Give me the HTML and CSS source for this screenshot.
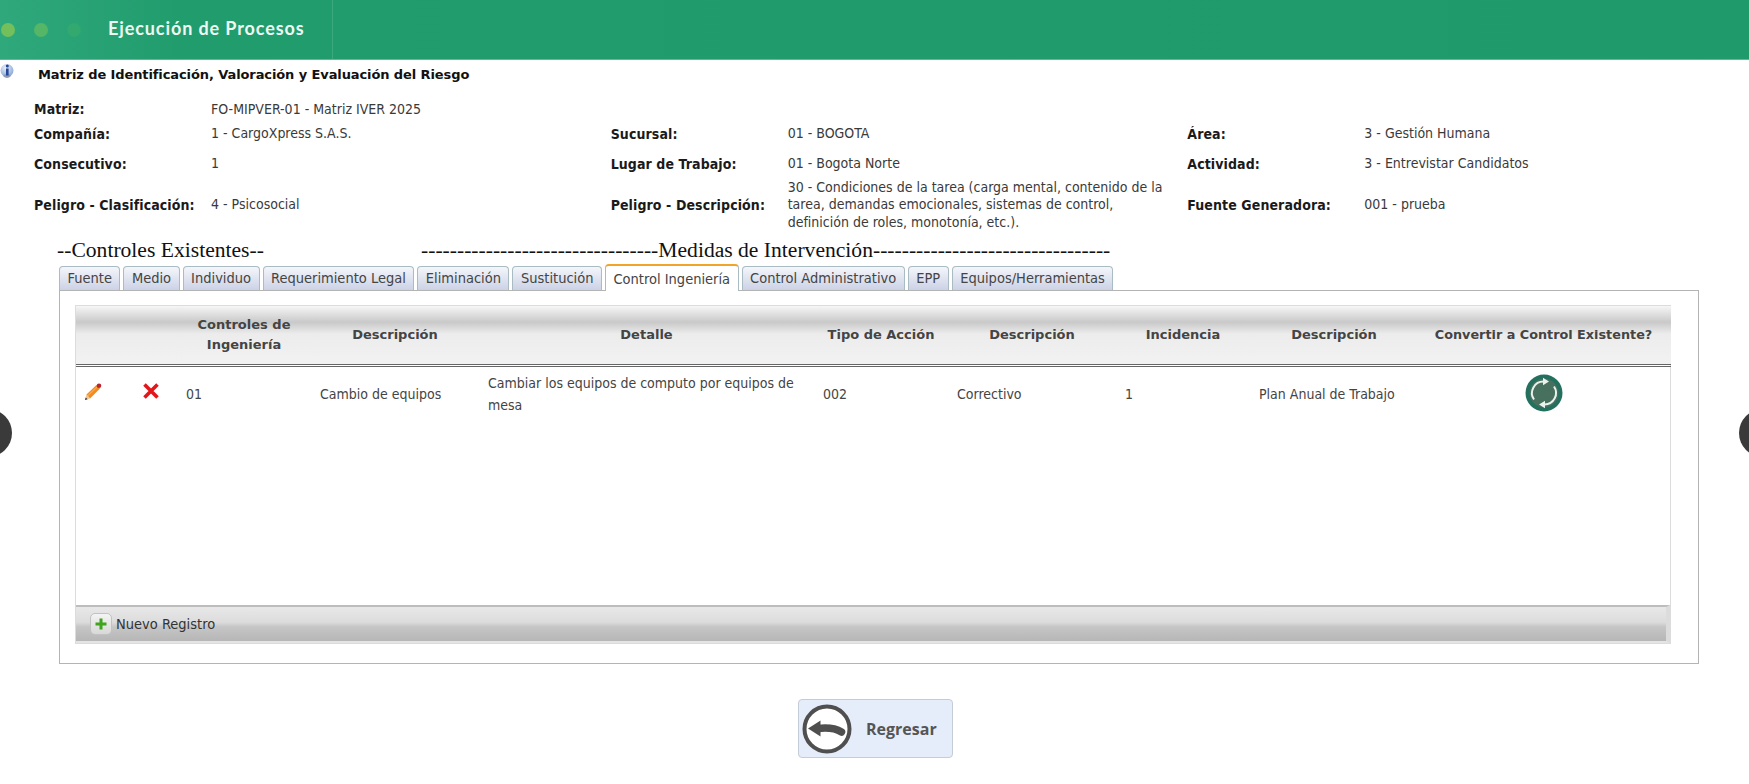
FILE: index.html
```html
<!DOCTYPE html>
<html lang="es">
<head>
<meta charset="utf-8">
<title>Ejecución de Procesos</title>
<link rel="stylesheet" href="styles.css">
</head>
<body>
<header class="topbar">
  <div class="brand">
    <span class="dot dot-a"></span><span class="dot dot-b"></span><span class="dot dot-c"></span>
    <span class="brand-title">Ejecución de Procesos</span>
  </div>
</header>
<div class="title-row">
  <svg class="info-icon" width="15" height="17" viewBox="0 0 15 17"><defs><radialGradient id="sph" cx="0.4" cy="0.3" r="0.8"><stop offset="0" stop-color="#e8eff9"/><stop offset="1" stop-color="#7f9fd0"/></radialGradient></defs><circle cx="7" cy="7.5" r="6.5" fill="url(#sph)"/><path d="M3 13q4 4 8 0l-1-1.500H4z" fill="#8f9db3"/><rect x="6" y="5.500" width="2.600" height="7" fill="#23479a"/><circle cx="7.300" cy="3" r="1.500" fill="#23479a"/></svg>
  <h1 class="page-title">Matriz de Identificación, Valoración y Evaluación del Riesgo</h1>
</div>
<table class="info">
  <colgroup><col class="c-l"><col class="c-v"><col class="c-l"><col class="c-v"><col class="c-l"><col class="c-v"></colgroup>
  <tr class="r1"><th>Matriz:</th><td colspan="5">FO-MIPVER-01 - Matriz IVER 2025</td></tr>
  <tr class="r2"><th>Compañía:</th><td>1 - CargoXpress S.A.S.</td><th>Sucursal:</th><td>01 - BOGOTA</td><th>Área:</th><td>3 - Gestión Humana</td></tr>
  <tr class="r3"><th>Consecutivo:</th><td>1</td><th>Lugar de Trabajo:</th><td>01 - Bogota Norte</td><th>Actividad:</th><td>3 - Entrevistar Candidatos</td></tr>
  <tr class="r4"><th>Peligro - Clasificación:</th><td>4 - Psicosocial</td><th>Peligro - Descripción:</th><td>30 - Condiciones de la tarea (carga mental, contenido de la<br>tarea, demandas emocionales, sistemas de control,<br>definición de roles, monotonía, etc.).</td><th>Fuente Generadora:</th><td>001 - prueba</td></tr>
</table>
<div class="legend"><span class="legend-a">--Controles Existentes--</span><span class="legend-b">---------------------------------Medidas de Intervención---------------------------------</span></div>
<section class="tabs-wrap">
  <nav class="tabs">
    <a class="tab">Fuente</a><a class="tab">Medio</a><a class="tab">Individuo</a><a class="tab">Requerimiento Legal</a><a class="tab">Eliminación</a><a class="tab">Sustitución</a><a class="tab active">Control Ingeniería</a><a class="tab">Control Administrativo</a><a class="tab">EPP</a><a class="tab">Equipos/Herramientas</a>
  </nav>
  <div class="panel">
    <div class="grid">
      <div class="grid-body">
        <table class="data">
          <colgroup><col class="w60"><col class="w45"><col class="w134"><col class="w168"><col class="w335"><col class="w134"><col class="w168"><col class="w134"><col class="w168"><col class="w249"></colgroup>
          <thead>
            <tr><th></th><th></th><th>Controles de Ingeniería</th><th>Descripción</th><th>Detalle</th><th>Tipo de Acción</th><th>Descripción</th><th>Incidencia</th><th>Descripción</th><th class="narrow">Convertir a Control Existente?</th></tr>
          </thead>
          <tbody>
            <tr>
              <td class="icon-cell"><svg width="20" height="20" viewBox="0 0 20 20"><path d="M3.500 12.500L13.500 3l3.500 3.500L7 16.500z" fill="#f28a1e"/><path d="M5 13.500L14 5" stroke="#f7a94e" stroke-width="1.200"/><circle cx="16" cy="3.700" r="2.300" fill="#b8262f"/><path d="M2 18l1.500-5.500L7 16.500z" fill="#f2c48c"/><path d="M2 18l.7-2.500 1.900 1.800z" fill="#333"/></svg></td>
              <td class="icon-cell x-cell"><svg width="18" height="18" viewBox="0 0 18 18"><path d="M2.500 2.500l13 13M15.500 2.500l-13 13" fill="none" stroke="#e3161b" stroke-width="3.600"/></svg></td>
              <td>01</td>
              <td>Cambio de equipos</td>
              <td class="detail">Cambiar los equipos de computo por equipos de mesa</td>
              <td>002</td>
              <td>Correctivo</td>
              <td>1</td>
              <td>Plan Anual de Trabajo</td>
              <td class="center"><svg width="38" height="38" viewBox="0 0 38 38"><circle cx="19" cy="19" r="18.500" fill="#22705d"/><circle cx="19" cy="19" r="14.500" fill="#47705f"/><path d="M9 25.500A11.500 11.500 0 0 1 19 7.500M29 12.500A11.500 11.500 0 0 1 19 30.500" fill="none" stroke="#eaf2ee" stroke-width="2"/><path d="M18 3.800l6 3.700-6 3.700zM20 34.200l-6-3.700 6-3.700z" fill="#eaf2ee"/></svg></td>
            </tr>
          </tbody>
        </table>
      </div>
      <div class="grid-foot">
        <span class="plus"><svg width="14" height="14" viewBox="0 0 14 14"><path d="M5.500 1.500h3v4h4v3h-4v4h-3v-4h-4v-3h4z" fill="#3fa41e"/></svg></span>
        <span class="foot-text">Nuevo Registro</span>
      </div>
    </div>
  </div>
</section>
<div class="actions">
  <button class="back" type="button">
    <svg width="50" height="50" viewBox="0 0 50 50"><circle cx="25" cy="25" r="22.500" fill="#fff" stroke="#4f4f4f" stroke-width="4"/><path d="M6 24.500l12.500-8v16z" fill="#4f4f4f"/><path d="M16 24.500c9-1 17-.5 23.500 3.500" fill="none" stroke="#4f4f4f" stroke-width="7.500" stroke-linecap="round"/></svg>
    <span>Regresar</span>
  </button>
</div>
<span class="nav-circle nav-left"></span>
<span class="nav-circle nav-right"></span>
</body>
</html>
```
FILE: styles.css
```css
* { box-sizing: border-box; }
html, body { margin: 0; height: 100%; }
body {
  position: relative;
  overflow: hidden;
  background: #fff;
  color: #333;
  font-family: "DejaVu Sans Condensed", "DejaVu Sans", sans-serif;
  font-size: 14px;
}
.topbar {
  height: 60px;
  background: linear-gradient(90deg, #2fa97c 0, #219c6d 180px, #1f9b6b 100%);
  border-bottom: 1px solid #5cbc96;
}
.brand {
  width: 333px;
  height: 59px;
  display: flex;
  align-items: center;
  border-right: 1px solid #3aa97f;
}
.dot { width: 14px; height: 14px; border-radius: 50%; margin-right: 19px; flex: none; }
.dot-a { background: #72bf5b; margin-left: 1px; }
.dot-b { background: #55b667; }
.dot-c { background: #33a86f; margin-right: 27px; }
.brand-title {
  color: #eef8f3;
  font-family: Lato, sans-serif;
  font-weight: 700;
  font-size: 18px;
  letter-spacing: 0.9px;
  margin-top: -4px;
}
.title-row { position: relative; height: 29px; display: flex; align-items: center; padding-left: 38px; }
.info-icon { position: absolute; left: 0; top: 3px; }
.page-title { margin: 0; font-size: 13px; font-weight: 700; color: #111; font-family: "DejaVu Sans", sans-serif; letter-spacing: -0.1px; }
.info { border-collapse: collapse; table-layout: fixed; width: 1730px; margin: 11px 0 0 34px; }
.info th { text-align: left; font-size: 14px; font-weight: 700; color: #1a1a1a; padding: 0; letter-spacing: 0.1px; }
.info td { padding: 0; line-height: 17.5px; color: #3a3a3a; }
.c-l { width: 177px; }
.c-v { width: 399.5px; }
.r1 { height: 18.5px; }
.r2 { height: 30.5px; }
.r3 { height: 29.5px; }
.r4 { height: 52.5px; }
.legend { font-family: "Liberation Serif", serif; font-size: 21.6px; color: #111; margin: 6px 0 0 57px; height: 26px; line-height: 26px; display: flex; white-space: nowrap; }
.legend-a { width: 364px; flex: none; }
.tabs-wrap { margin: 0 50px 0 59px; }
.tabs { display: flex; gap: 3px; height: 27px; align-items: flex-end; position: relative; z-index: 1; }
.tab {
  height: 24px;
  padding: 0 7.5px;
  line-height: 23px;
  font-size: 14.5px;
  color: #444;
  background: linear-gradient(#f4f6fa, #ccd2e6);
  border: 1px solid #a9bcc4;
  border-bottom: 0;
  border-radius: 4px 4px 0 0;
}
.tab.active {
  height: 27px;
  line-height: 26px;
  background: #fff;
  border-top: 2px solid #f0a528;
  margin-bottom: -1px;
}
.panel { height: 374px; border: 1px solid #b4b4b4; padding: 14px 27px 19px 15px; background: #fff; }
.grid { height: 100%; display: flex; flex-direction: column; border: 1px solid #dcdcdc; }
.grid-body { flex: 1; min-height: 0; background: #fff; }
.data { border-collapse: collapse; table-layout: fixed; width: 100%; }
.w60 { width: 60px; } .w45 { width: 45px; } .w134 { width: 134px; } .w168 { width: 168px; } .w335 { width: 335px; } .w249 { width: 249px; }
.data thead th {
  height: 59px;
  padding: 0 8px 0 0;
  font-size: 13px;
  line-height: 20px;
  font-weight: 700;
  color: #444;
  font-family: "DejaVu Sans", sans-serif;
  text-align: center;
  background: linear-gradient(#f6f6f6 0, #c9c9c9 28%, #ececec 48%, #f2f2f2 100%);
  border-bottom: 3px double #666;
}
.data thead th.narrow { font-size: 12.8px; padding: 0 6px 0 0; white-space: nowrap; }
.data td { height: 56px; padding: 0 6px 0 5px; color: #444; line-height: 22px; }
.data .detail { padding-right: 16px; }
.data .icon-cell { padding: 0 0 4px 7px; }
.data .x-cell { padding: 0 0 6px 6px; }
.data .center { text-align: center; padding: 0 5px 2px 0; }
.data svg { display: block; }
.data .center svg { margin: 0 auto; }
.grid-foot {
  height: 38px;
  flex: none;
  display: flex;
  align-items: center;
  gap: 4px;
  padding-left: 14px;
  border-top: 2px solid #bdbdbd;
  border-right: 4px solid #dcdcdc;
  border-bottom: 2px solid #e4e4e4;
  background: linear-gradient(#e8e8e8 0, #dcdcdc 45%, #c6c6c6 58%, #b6b6b6 100%);
}
.plus { width: 22px; height: 22px; display: flex; align-items: center; justify-content: center; background: linear-gradient(#f4f4f4, #d8d8d8); border: 1px solid #c2c2c2; border-radius: 5px; }
.foot-text { color: #333; font-size: 14.5px; }
.actions { display: flex; justify-content: flex-start; padding-left: 798px; margin-top: 35px; }
.back {
  width: 155px;
  height: 59px;
  display: flex;
  align-items: center;
  gap: 14px;
  padding: 0 0 0 3px;
  background: #e6edfa;
  border: 1px solid #c4ccd8;
  border-radius: 4px;
  font-family: "Open Sans", sans-serif;
  font-size: 16px;
  font-weight: 700;
  color: #555;
}
.nav-circle { position: absolute; top: 409px; width: 48px; height: 48px; border-radius: 50%; background: #3a3a3a; }
.nav-left { left: -36px; }
.nav-right { right: -38px; }
```
